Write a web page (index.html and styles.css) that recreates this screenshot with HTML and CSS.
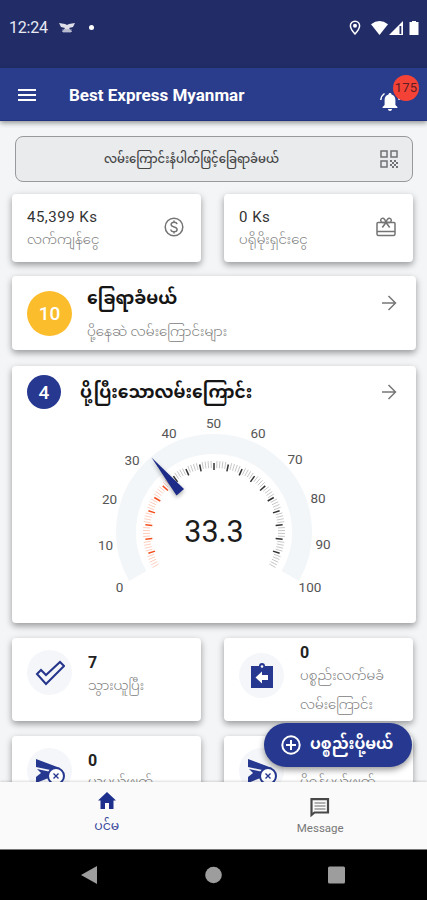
FILE: index.html
```
<!DOCTYPE html>
<html lang="my">
<head>
<meta charset="utf-8">
<meta name="viewport" content="width=device-width">
<title>Best Express Myanmar</title>
<link rel="stylesheet" href="styles.css">
</head>
<body>
<div class="phone">
  <div class="status">
    <span class="clock">12:24</span>
    <svg class="bird" width="16" height="12" viewBox="0 0 16 12"><path d="M0 1l6 1 2 1 2-1 6-1-2 4-4 1 3 4H3l3-4-4-1z" fill="#fff" opacity=".85"/><path d="M3 8h10M4 10h8" stroke="#9299b5" stroke-width="1"/></svg>
    <span class="dot"></span>
    <svg class="pin" width="12" height="16" viewBox="0 0 12 16"><path d="M6 1.200a4.600 4.600 0 0 0-4.600 4.600C1.400 9 6 14 6 14s4.600-5 4.600-8.200A4.600 4.600 0 0 0 6 1.200z" fill="none" stroke="#fff" stroke-width="1.500"/><circle cx="6" cy="5.800" r="2" fill="#fff"/></svg>
    <svg class="signals" width="50" height="16" viewBox="0 0 50 16"><path d="M0 4.200Q8.500-2 17 4.200L8.500 15z" fill="#fff"/><path d="M32 1v14H18z" fill="#fff"/><path d="M28.500 6h1.800v8h-1.800z" fill="#222d68"/><path d="M41 1h4v1h2.500v13H38.500V2H41z" fill="#fff"/></svg>
  </div>
  <header class="appbar">
    <svg class="menu" width="18" height="14" viewBox="0 0 18 14"><path d="M0 2h18M0 7h18M0 12h18" stroke="#fff" stroke-width="2"/></svg>
    <h1>Best Express Myanmar</h1>
    <div class="alerts">
      <svg width="20" height="20" viewBox="0 0 20 20" fill="#fff"><path d="M10 1c1 0 1.500.7 1.500 1.600 2.600.7 3.900 2.700 3.900 5.400v5l2 2v1H2.600v-1l2-2V8c0-2.700 1.300-4.700 3.900-5.400C8.500 1.700 9 1 10 1zM8 17h4c0 1.200-.9 2-2 2s-2-.8-2-2z"/><path d="M4.500 1.500C2.300 3 1 5.200.8 8M15.500 1.500C17.700 3 19 5.200 19.200 8" fill="none" stroke="#fff" stroke-width="1.500"/></svg>
      <span class="count">175</span>
    </div>
  </header>
  <main>
    <div class="search">
      <span>လမ်းကြောင်းနံပါတ်ဖြင့်ခြေရာခံမယ်</span>
      <svg width="18" height="18" viewBox="0 0 18 18" fill="none" stroke="#707276" stroke-width="1.500"><path d="M1 1h6v6H1zM11 1h6v6h-6zM1 11h6v6H1z"/><path d="M10 11h2m2 0h2m-4 2h2m2 0h2m-8 2h2m2 0h2m-4 2h2m2 0h2" stroke-width="1.800"/></svg>
    </div>
    <div class="row">
      <section class="card money">
        <div><b>45,399 Ks</b><p>လက်ကျန်ငွေ</p></div>
        <svg width="20" height="20" viewBox="0 0 20 20" fill="none" stroke="#747474" stroke-width="1.500"><circle cx="10" cy="10" r="8.800"/><path d="M13 7.200C12.700 5.800 11.600 5.300 10 5.300c-1.700 0-2.900.8-2.900 2.200 0 3.300 6 1.600 6 5 0 1.400-1.300 2.300-3.100 2.300S7 14 6.800 12.500M10 3.600v1.700M10 14.800v1.700"/></svg>
      </section>
      <section class="card money">
        <div><b>0 Ks</b><p>ပရိုမိုးရှင်းငွေ</p></div>
        <svg width="20" height="20" viewBox="0 0 20 20" fill="none" stroke="#747474" stroke-width="1.500"><path d="M2 5.500h16q1 0 1 1V17q0 1.500-1.500 1.500h-15Q1 18.500 1 17V6.500q0-1 1-1zM1 14.500h18"/><path d="M10 5.500C9 2 7.500 1 6 1.400 4 2 4.500 5.500 6.500 5.500zM10 5.500c1-3.500 2.500-4.500 4-4.100 2 .6 1.500 4.100-.5 4.100zM10 5.500l-3.700 5M10 5.500l3.700 5"/></svg>
      </section>
    </div>
    <section class="card track">
      <span class="badge amber">10</span>
      <div class="words"><h2>ခြေရာခံမယ်</h2><p>ပို့နေဆဲ လမ်းကြောင်းများ</p></div>
      <svg class="arrow" width="16" height="16" viewBox="0 0 16 16"><path d="M1 8h13M7.500 1l7 7-7 7" fill="none" stroke="#777" stroke-width="1.500"/></svg>
    </section>
    <section class="card delivered">
      <div class="head">
        <span class="badge navy">4</span>
        <h2>ပို့ပြီးသောလမ်းကြောင်း</h2>
        <svg class="arrow" width="16" height="16" viewBox="0 0 16 16"><path d="M1 8h13M7.500 1l7 7-7 7" fill="none" stroke="#777" stroke-width="1.500"/></svg>
      </div>
      <svg class="gauge" width="250" height="190" viewBox="89 410 250 190">
        <path d="M137.800 576A88 88 0 1 1 290.200 576" fill="none" stroke="#f3f6f8" stroke-width="20"/>
        <g id="ticks"></g>
        <path class="needle" d="M151.500 457.500L184 489L176.500 495.500z"/>
        <g class="scale">
          <text x="119.500" y="592">0</text><text x="105.500" y="549.500">10</text><text x="109.500" y="504">20</text><text x="132" y="464.500">30</text><text x="169" y="437.500">40</text><text x="213.500" y="427.500">50</text><text x="258" y="437.500">60</text><text x="295" y="464">70</text><text x="318" y="503">80</text><text x="323" y="548.500">90</text><text x="310" y="591.500">100</text>
        </g>
        <text class="value" x="214" y="542">33.3</text>
      </svg>
    </section>
    <div class="row">
      <section class="card stat">
        <span class="disc"><svg width="30" height="26" viewBox="0 0 30 26"><path d="M2 14l4-4 5 5L25 2l4 4-18 18z" fill="none" stroke="#26358c" stroke-width="2"/></svg></span>
        <div class="words"><b>7</b><p>သွားယူပြီး</p></div>
      </section>
      <section class="card stat high">
        <span class="disc"><svg width="24" height="26" viewBox="0 0 24 26"><path d="M1 3h8a3 3 0 0 1 6 0h8v22H1z" fill="#26388f"/><circle cx="12" cy="3.500" r="1.300" fill="#fff"/><path d="M5.500 14.500l6.500-6v3.500h6v5h-6v3.500z" fill="#fff"/></svg></span>
        <div class="words"><b>0</b><p>ပစ္စည်းလက်မခံ<br>လမ်းကြောင်း</p></div>
      </section>
    </div>
    <div class="row last">
      <section class="card stat">
        <span class="disc"><svg width="30" height="26" viewBox="0 0 30 26"><path d="M1 1l24 9v4L1 9zM2 11l14 3v5L1 25v-6l5-4z" fill="#26388f"/><circle cx="21" cy="18" r="8" fill="#fff" stroke="#26388f" stroke-width="2"/><path d="M18.500 15.500l5 5m0-5l-5 5" stroke="#26388f" stroke-width="1.400"/></svg></span>
        <div class="words"><b>0</b><p>ယူပယ်ဖျက်</p></div>
      </section>
      <section class="card stat">
        <span class="disc"><svg width="30" height="26" viewBox="0 0 30 26"><path d="M1 1l24 9v4L1 9zM2 11l14 3v5L1 25v-6l5-4z" fill="#26388f"/><circle cx="21" cy="18" r="8" fill="#fff" stroke="#26388f" stroke-width="2"/><path d="M18.500 15.500l5 5m0-5l-5 5" stroke="#26388f" stroke-width="1.400"/></svg></span>
        <div class="words"><p class="second">ပို့ရန်ပယ်ဖျက်</p></div>
      </section>
    </div>
    <button class="fab">
      <svg width="20" height="20" viewBox="0 0 20 20" fill="none" stroke="#fff" stroke-width="2"><circle cx="10" cy="10" r="8.700"/><path d="M10 5v10M5 10h10"/></svg>
      <span>ပစ္စည်းပို့မယ်</span>
    </button>
  </main>
  <nav class="tabs">
    <div class="tab active"><svg width="18" height="17" viewBox="0 0 18 17"><path d="M9 0l9 8.500h-2.500V17H11v-6H7v6H2.500V8.500H0z" fill="#1d2f8c"/></svg><span>ပင်မ</span></div>
    <div class="tab"><svg width="20" height="19" viewBox="0 0 20 19"><path d="M2 1.200h16v13.300H4.500L1.500 17V1.200z" fill="none" stroke="#484848" stroke-width="2.200"/><path d="M4.500 5h11M4.500 8h11M4.500 11h11" stroke="#686868" stroke-width="1.200"/></svg><span>Message</span></div>
  </nav>
  <div class="system">
    <svg width="17" height="18" viewBox="0 0 17 18"><path d="M16 0v18L0 9z"/></svg>
    <svg width="17" height="18" viewBox="0 0 17 18"><circle cx="8.500" cy="9" r="8.300"/></svg>
    <svg width="17" height="18" viewBox="0 0 17 18"><rect y=".5" width="17" height="17" rx="1.500"/></svg>
  </div>
</div>
<script src="gauge.js"></script>
</body>
</html>
```
FILE: gauge.js
```
const ticks = document.getElementById('ticks');
const cx = 214, cy = 532, reading = 33.3;
for (let v = 0; v <= 100; v++) {
  const a = (150 + v * 2.4) * Math.PI / 180;
  const major = v % 5 === 0 && v > 0 && v < 100;
  const outer = major ? 69 : 71, inner = major ? 62 : 64;
  const line = document.createElementNS('http://www.w3.org/2000/svg', 'line');
  line.setAttribute('x1', cx + outer * Math.cos(a));
  line.setAttribute('y1', cy + outer * Math.sin(a));
  line.setAttribute('x2', cx + inner * Math.cos(a));
  line.setAttribute('y2', cy + inner * Math.sin(a));
  line.setAttribute('class', (major ? 'major' : 'minor') + (v <= reading ? ' reached' : ''));
  ticks.appendChild(line);
}
```
FILE: styles.css
```
* { box-sizing: border-box; }
body, h1, h2, p { margin: 0; }
body { font-family: Roboto, "Noto Sans Myanmar", "Noto Sans", sans-serif; color: #222; }
svg { display: block; flex: none; }
.phone { width: 427px; height: 900px; overflow: hidden; display: flex; flex-direction: column; background: #f3f5f7; }
.status { height: 68px; flex: none; background: #222d68; display: flex; align-items: center; padding: 0 7px 13px 9px; color: #e8eaf4; }
.clock { font-size: 16px; width: 38px; letter-spacing: -.2px; }
.bird { margin-left: 12px; }
.dot { width: 5px; height: 5px; border-radius: 50%; background: #fff; margin-left: 14px; }
.pin { margin-left: auto; margin-right: 10px; }
.signals { margin-right: -1px; }
.appbar { height: 53px; flex: none; background: #2a3d8c; border-bottom: 1px solid #24327e; display: flex; align-items: center; padding: 0 27px 0 18px; box-shadow: 0 2px 5px #0006; position: relative; z-index: 2; color: #fff; }
.appbar h1 { font-size: 17px; font-weight: 700; margin: 2px 0 0 33px; white-space: nowrap; }
.menu { margin-top: 2px; }
.alerts { position: relative; margin-left: auto; margin-top: 15px; }
.count { position: absolute; left: 13px; top: -17px; width: 26px; height: 26px; border-radius: 50%; background: #f44336; color: #5e1c25; font-size: 13px; line-height: 26px; text-align: center; letter-spacing: .2px; }
main { position: relative; height: 661px; overflow: hidden; padding: 15px 11px 0 12px; flex: none; display: flex; flex-direction: column; }
main > * { flex: none; }
.search { height: 46px; margin: 0 0 12px 3px; border: 1px solid #97999c; border-radius: 8px; background: #e9ebed; display: flex; align-items: center; padding: 0 14px 0 0; width: 398px; color: #444; }
.search span { flex: 1; text-align: center; padding: 2px 13px 0 0; font-size: 11.650px; font-weight: 500; white-space: nowrap; }
.row { display: grid; grid-template-columns: 189px 189px; column-gap: 23px; }
.card { background: #fff; border-radius: 4px; box-shadow: 0 3px 6px #0005, 0 2px 12px #0001; }
.money { height: 68px; display: flex; justify-content: space-between; padding: 14px 17px 0 15px; }
.money b { display: block; font-size: 15px; line-height: 18px; font-weight: 400; letter-spacing: .5px; color: #333; }
.money p { font-size: 13.300px; line-height: 27px; white-space: nowrap; }
.money svg { margin-top: 9px; }
p { color: #7c7c7c; font-weight: 300; }
.track { width: 404px; height: 74px; margin-top: 14px; display: flex; padding: 0 19px 0 15px; }
.badge { border-radius: 50%; display: flex; align-items: center; justify-content: center; color: #fff; font-weight: 500; flex: none; }
.amber { width: 45px; height: 45px; background: #fbbd2b; margin-top: 15px; font-size: 19px; }
.navy { width: 34px; height: 34px; background: #26388f; font-size: 19px; }
.track .words { margin-left: 15px; }
h2 { font-size: 17.100px; line-height: 28px; font-weight: 700; color: #151515; white-space: nowrap; }
.track h2 { margin-top: 8px; }
.track p { font-size: 13.500px; line-height: 26px; margin-top: 6px; white-space: nowrap; }
.arrow { margin-left: auto; }
.track .arrow { margin-top: 19px; }
.delivered { width: 404px; height: 257px; margin-top: 16px; padding: 9px 19px 0 15px; }
.head { display: flex; align-items: center; height: 34px; }
.head h2 { margin-left: 19px; }
.gauge { margin: 1px 0 0 62px; }
.minor { stroke: #a0a0a0; stroke-width: .6; }
.major { stroke: #333; stroke-width: 1.500; }
.minor.reached { stroke: #ffab91; }
.major.reached { stroke: #f4511e; }
.needle { fill: #1b2b87; filter: drop-shadow(0 2px 2px #0005); }
.scale text { font-size: 13.500px; fill: #555; text-anchor: middle; }
.value { font-size: 30.500px; fill: #1c1c1c; text-anchor: middle; }
.delivered + .row { margin-top: 15px; }
.stat { height: 83px; display: flex; padding: 12px 0 0 15px; }
.disc { width: 45px; height: 45px; border-radius: 50%; background: #f4f6f9; display: flex; align-items: center; justify-content: center; flex: none; }
.words b { display: block; font-size: 16px; line-height: 20px; font-weight: 700; color: #222; }
.stat .words { margin-left: 16px; margin-top: 3px; }
.stat p { font-size: 13.300px; line-height: 29px; white-space: nowrap; margin-top: -2px; }
.high { padding-top: 15px; }
.high .words { margin-top: -10px; }
.last { margin-top: 15px; }
.last .words p { margin-top: -4px; }
.last .words .second { margin-top: 16px; }
.fab { position: absolute; right: 15px; bottom: 15px; width: 148px; height: 44px; border: 0; border-radius: 22px; background: #26388f; color: #fff; display: flex; align-items: center; padding: 0 16px 0 17px; gap: 9px; font: 700 15.500px Roboto, "Noto Sans Myanmar", sans-serif; white-space: nowrap; box-shadow: 0 3px 6px #0006; }
.tabs { height: 67px; flex: none; background: #fafafa; display: flex; box-shadow: 0 -1px 2px #0002; position: relative; }
.tab { flex: 1; display: flex; flex-direction: column; align-items: center; padding-top: 16px; font-size: 11.500px; color: #777; }
.tab span { margin-top: 4px; }
.tab.active { padding-top: 10px; color: #3b4a9b; font-size: 12.500px; }
.system { height: 51px; flex: none; background: #000; border-top: 1px solid #777; display: flex; justify-content: space-between; padding: 16px 82px 0 81px; fill: #9d9d9d; }
```
